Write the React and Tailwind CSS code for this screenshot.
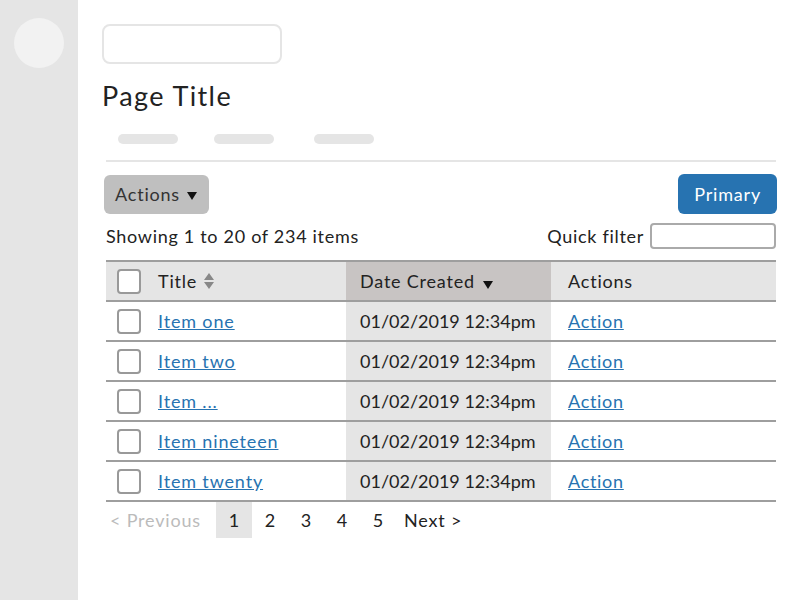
import React from "react";

const rows = ["Item one", "Item two", "Item ...", "Item nineteen", "Item twenty"];

function Checkbox() {
  return <div className="w-[24px] h-[25px] border-2 border-[#999999] rounded-[4px] bg-white" />;
}

function Down({ className }) {
  return (
    <svg width="10" height="8" viewBox="0 0 10 8" className={className}>
      <path d="M0 0 L10 0 L5 8 Z" fill="#111" />
    </svg>
  );
}

export default function App() {
  return (
    <div className="flex w-[800px] h-[600px] bg-white text-[#222] text-[18px]" style={{ fontFamily: "Lato, 'Open Sans', sans-serif" }}>
      <div className="w-[78px] shrink-0 bg-[#e5e5e5] flex justify-center pt-[18px]">
        <div className="w-[50px] h-[50px] rounded-full bg-[#f2f2f2]" />
      </div>
      <div className="flex-1 pl-[24px] pr-[24px] pt-[24px] flex flex-col">
        <div className="w-[180px] h-[40px] border-2 border-[#e5e5e5] rounded-[8px]" />
        <h1 className="mt-[16px] text-[27px] leading-[32px] tracking-[1.4px] text-[#222]">Page Title</h1>
        <div className="flex mt-[22px] ml-[16px] h-[10px]">
          <div className="w-[60px] h-[10px] rounded-full bg-[#e5e5e5]" />
          <div className="w-[60px] h-[10px] rounded-full bg-[#e5e5e5] ml-[36px]" />
          <div className="w-[60px] h-[10px] rounded-full bg-[#e5e5e5] ml-[40px]" />
        </div>
        <div className="mt-[16px] ml-[4px] h-[2px] bg-[#e5e5e5]" />
        <div className="mt-[12px] flex justify-between items-center ml-[2px] mr-[-1px]">
          <button className="h-[39px] pl-[11px] pr-[12px] rounded-[6px] bg-[#bfbfbf] text-[#333] flex items-center gap-[7px] tracking-[0.8px]">
            Actions <Down className="mt-[3px]" />
          </button>
          <button className="h-[40px] px-[16px] rounded-[6px] bg-[#2773b1] text-white tracking-[0.8px]">Primary</button>
        </div>
        <div className="mt-[8px] ml-[4px] h-[28px] flex items-center justify-between tracking-[0.7px]">
          <span>Showing 1 to 20 of 234 items</span>
          <div className="flex items-center gap-[6px]">
            <span>Quick filter</span>
            <div className="w-[126px] h-[26px] border-2 border-[#aaaaaa] rounded-[4px]" />
          </div>
        </div>
        <div className="mt-[10px] ml-[4px] border-t-2 border-[#9e9e9e]">
          <div className="flex h-[40px] border-b-2 border-[#9e9e9e] bg-[#e5e5e5] tracking-[0.8px]">
            <div className="w-[240px] flex items-center pl-[11px]">
              <Checkbox />
              <span className="ml-[17px]">Title</span>
              <svg width="12" height="18" viewBox="0 0 12 18" className="ml-[6px]">
                <path d="M1 8 L11 8 L6 1 Z M1 10 L11 10 L6 17 Z" fill="#888" />
              </svg>
            </div>
            <div className="w-[205px] flex items-center pl-[14px] bg-[#c8c4c3]">
              <span>Date Created</span>
              <Down className="ml-[8px] mt-[8px]" />
            </div>
            <div className="flex-1 flex items-center pl-[17px]">Actions</div>
          </div>
          {rows.map((r) => (
            <div key={r} className="flex h-[40px] border-b-2 border-[#9e9e9e]">
              <div className="w-[240px] flex items-center pl-[11px]">
                <Checkbox />
                <a href="#" className="ml-[17px] text-[#2773b1] underline tracking-[0.85px]">{r}</a>
              </div>
              <div className="w-[205px] flex items-center pl-[14px] bg-[#e5e5e5]">01/02/2019 12:34pm</div>
              <div className="flex-1 flex items-center pl-[17px]">
                <a href="#" className="text-[#2773b1] underline tracking-[0.7px]">Action</a>
              </div>
            </div>
          ))}
          <div className="flex h-[36px] items-center">
            <div className="w-[110px] h-full flex items-center pl-[4px] text-[#bbbbbb] tracking-[0.8px]">&lt; Previous</div>
            <div className="w-[36px] h-full flex items-center justify-center bg-[#e5e5e5]">1</div>
            <div className="w-[36px] h-full flex items-center justify-center">2</div>
            <div className="w-[36px] h-full flex items-center justify-center">3</div>
            <div className="w-[36px] h-full flex items-center justify-center">4</div>
            <div className="w-[36px] h-full flex items-center justify-center">5</div>
            <div className="h-full flex items-center pl-[8px] tracking-[0.8px]">Next &gt;</div>
          </div>
        </div>
      </div>
    </div>
  );
}
